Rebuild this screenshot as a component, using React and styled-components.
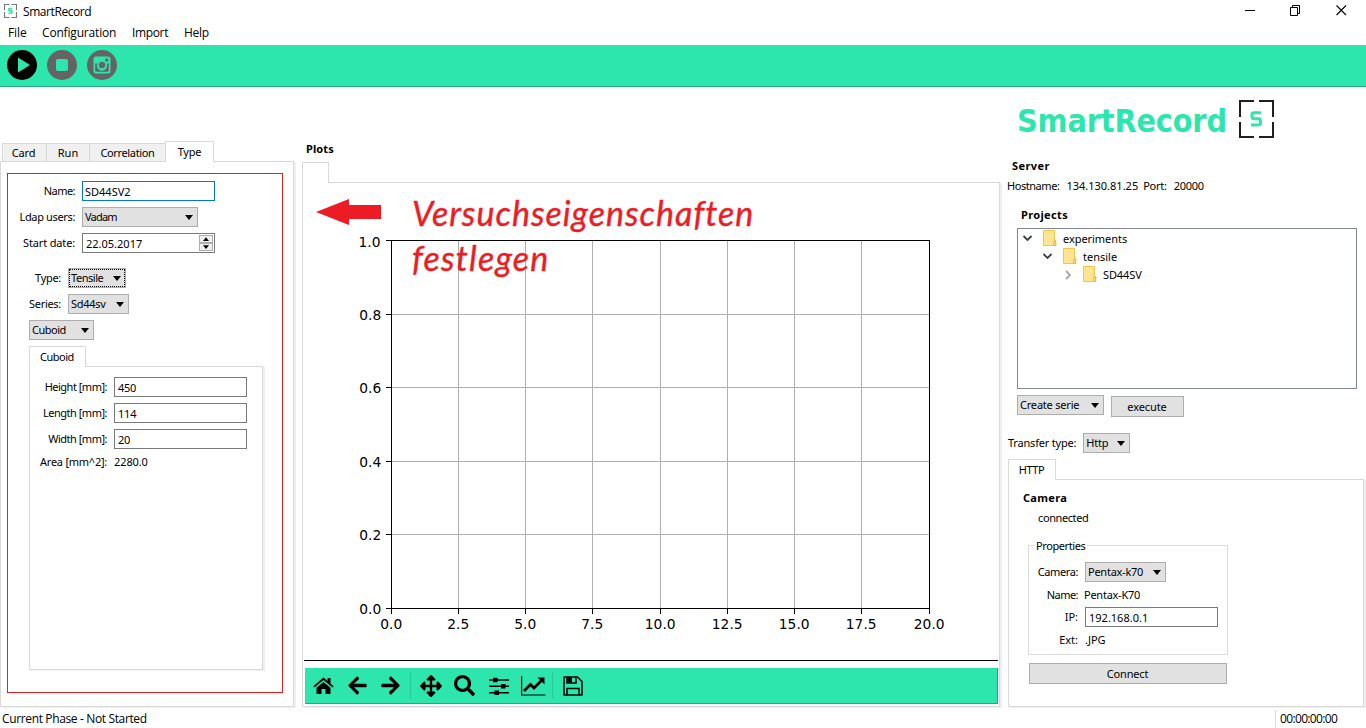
import React from 'react';
import styled, { createGlobalStyle, css } from 'styled-components';
import { FaArrowLeft, FaArrowRight, FaArrowsAlt, FaSearch } from 'react-icons/fa';

const GREEN = '#2de6ad';
const LINE = '#d9d9d9';
const RED = '#ed1c24';

const Global = createGlobalStyle`
  *, *::before, *::after { box-sizing: border-box; }
  body { margin: 0; background: #fff; overflow: hidden; }
  svg { display: block; flex: none; }
`;

const Window = styled.div`
  width: 1366px;
  height: 728px;
  display: flex;
  flex-direction: column;
  background: #fff;
  color: #000;
  font: 11px/14px 'Noto Sans', 'Open Sans', sans-serif;
  white-space: nowrap;
`;

const TitleBar = styled.header`
  height: 22px;
  display: flex;
  align-items: flex-start;
  padding: 4px 19px 0 4px;
`;
const Title = styled.span`
  margin-left: 6px;
  flex: 1;
  font: 12px/16px 'Open Sans', sans-serif;
  letter-spacing: -0.42px;
`;
const Controls = styled.div`
  display: flex;
  gap: 35px;
  padding-top: 1px;
`;

const MenuBar = styled.nav`
  height: 23px;
  display: flex;
  gap: 16px;
  padding: 2px 8px;
  font: 12px/18px 'Open Sans', sans-serif;
`;
const MenuItem = styled.span`
  width: ${(p) => p.$w}px;
  letter-spacing: ${(p) => p.$track || 0}px;
`;

const ToolBar = styled.div`
  height: 42px;
  display: flex;
  gap: 10px;
  padding: 5px 7px;
  background: ${GREEN};
  border-bottom: 1px solid #27ab85;
`;

const Main = styled.main`
  height: 621px;
  display: grid;
  grid-template-columns: 302px 704px 360px;
`;
const Column = styled.section`
  display: flex;
  flex-direction: column;
  align-items: flex-start;
  padding-top: ${(p) => p.$top || 0}px;
`;

const Text = styled.span`
  letter-spacing: ${(p) => p.$track || 0}px;
  margin-left: ${(p) => p.$shift || 0}px;
`;
const Heading = styled.h2`
  margin: ${(p) => p.$m || 0};
  font: bold 11px/14px 'Noto Sans', sans-serif;
  letter-spacing: ${(p) => p.$track || 0}px;
`;

const Tabs = styled.div`
  display: flex;
  align-items: flex-end;
  position: relative;
  z-index: 1;
  margin-bottom: -1px;
  padding-left: ${(p) => p.$left || 0}px;
`;
const Tab = styled.div`
  width: ${(p) => p.$w}px;
  height: 18px;
  border: 1px solid ${LINE};
  border-width: 1px 0 0 1px;
  background: #f0f0f0;
  margin-bottom: 1px;
  padding-right: ${(p) => p.$pr || 0}px;
  text-align: center;
  line-height: 18px;
  letter-spacing: ${(p) => p.$track || 0}px;
  ${(p) =>
    p.$active &&
    css`
      height: 21px;
      margin-bottom: 0;
      border-width: 1px 1px 0;
      background: #fff;
      line-height: 20px;
    `}
`;
const Pane = styled.div`
  width: ${(p) => p.$w}px;
  height: ${(p) => p.$h}px;
  border: 1px solid ${LINE};
  box-shadow: 2px 1px 0 #efefef;
  padding: ${(p) => p.$pad || 0};
`;

const Frame = styled.div`
  width: 276px;
  height: 520px;
  border: 1px solid ${RED};
  padding: 7px 0 0 21px;
`;
const Row = styled.div`
  display: flex;
  align-items: center;
  gap: ${(p) => p.$gap || 7}px;
  height: ${(p) => p.$h || 20}px;
  margin-top: ${(p) => p.$mt || 0}px;
  margin-left: ${(p) => p.$ml || 0}px;
`;
const Label = styled.label`
  width: ${(p) => p.$w}px;
  display: flex;
  justify-content: flex-end;
  letter-spacing: ${(p) => p.$track || 0}px;
`;
const Field = styled.div`
  width: 133px;
  height: 20px;
  display: flex;
  align-items: center;
  justify-content: space-between;
  padding: 2px 2px 0 ${(p) => p.$pl || 3}px;
  border: 1px solid ${(p) => (p.$focus ? '#0078d7' : '#7a7a7a')};
  background: #fff;
  letter-spacing: ${(p) => p.$track || 0}px;
`;
const ComboBox = styled.div`
  width: ${(p) => p.$w}px;
  height: 20px;
  display: flex;
  align-items: center;
  justify-content: space-between;
  padding: 0 4px 0 2px;
  border: 1px solid #adadad;
  background: #e1e1e1;
  letter-spacing: ${(p) => p.$track || 0}px;
  ${(p) => p.$focus && css`outline: 1px dotted #000; outline-offset: -2px;`}
`;
const Button = styled.div`
  width: ${(p) => p.$w}px;
  height: 21px;
  margin: ${(p) => p.$m || 0};
  padding-right: 1px;
  border: 1px solid #adadad;
  background: #e1e1e1;
  text-align: center;
  line-height: 20px;
  letter-spacing: ${(p) => p.$track || 0}px;
`;
const Spinner = styled.div`
  display: flex;
  flex-direction: column;
  margin: -2px -1px 0 0;
`;
const SpinButton = styled.div`
  width: 14px;
  height: 8px;
  display: flex;
  align-items: center;
  justify-content: center;
  border: 1px solid #adadad;
  background: #f0f0f0;
`;

const PlotArea = styled.div`
  position: relative;
  height: 478px;
  margin: 0 1px;
  border-bottom: 1px solid #000;
`;
const Note = styled.div`
  position: absolute;
  left: 108px;
  top: 7px;
  color: ${RED};
  font: italic 34px/45px Lato, sans-serif;
  font-variant-ligatures: none;
  -webkit-text-stroke: 0.4px ${RED};
`;
const NoteLine = styled.div`
  letter-spacing: ${(p) => p.$track}px;
`;
const Arrow = styled.svg`
  position: absolute;
  left: 12px;
  top: 16px;
`;
const PlotTools = styled.div`
  height: 36px;
  width: 693px;
  margin: 7px 0 0 2px;
  display: flex;
  align-items: center;
  padding-left: 7px;
  background: ${GREEN};
  border: solid #1fab80;
  border-width: 0 1px 1px 0;
`;
const Tool = styled.div`
  width: ${(p) => p.$w || 34}px;
  display: flex;
  justify-content: center;
`;
const Divider = styled.div`
  width: 1px;
  height: 27px;
  background: #29c998;
`;

const Brand = styled.div`
  display: flex;
  align-items: flex-start;
  height: 39px;
  margin-left: 11px;
`;
const BrandName = styled.h1`
  margin: 0;
  width: 222px;
  font: bold 32px/42px 'DejaVu Sans Condensed', 'DejaVu Sans', sans-serif;
  font-stretch: condensed;
  color: ${GREEN};
  letter-spacing: ${(p) => p.$track}px;
`;
const Tree = styled.div`
  width: 340px;
  height: 161px;
  margin: 6px 0 0 11px;
  border: 1px solid #828790;
  padding-top: 1px;
`;
const TreeRow = styled.div`
  height: 18px;
  display: flex;
  align-items: center;
  padding-left: ${(p) => 4 + p.$depth * 20}px;
  letter-spacing: ${(p) => p.$track || 0}px;
  svg + svg { margin: -1px 6px 0 9px; }
`;
const Group = styled.fieldset`
  width: 200px;
  height: 117px;
  margin: 13px 0 0 19px;
  padding: 10px 0 0 0;
  border: 1px solid #dcdcdc;
`;
const Legend = styled.legend`
  height: 14px;
  margin-left: 5px;
  padding: 0 2px;
  line-height: 16px;
  letter-spacing: ${(p) => p.$track || 0}px;
`;

const StatusBar = styled.footer`
  height: 20px;
  display: flex;
  justify-content: space-between;
  padding: 2px 0 0 2px;
  font: 12px/17px 'Open Sans', sans-serif;
`;
const Clock = styled.div`
  width: 91px;
  height: 17px;
  border-left: 1px solid ${LINE};
  padding-left: 4px;
  letter-spacing: ${(p) => p.$track || 0}px;
`;

const Caret = ({ up, small }) => (
  <svg width={small ? 6 : 8} height={small ? 4 : 5} viewBox="0 0 8 5">
    <path d={up ? 'M0 5L4 0L8 5Z' : 'M0 0H8L4 5Z'} />
  </svg>
);
const Combo = ({ children, ...rest }) => (
  <ComboBox {...rest}>
    <span>{children}</span>
    <Caret />
  </ComboBox>
);

const Mark = ({ w, h, stroke, sw }) => (
  <svg width={w} height={h} viewBox="0 0 35 38" fill="none">
    <path
      d="M1 17V1H15M20 1H34V17M34 22V37H20M15 37H1V22"
      stroke={stroke}
      strokeWidth={sw}
    />
    <path d="M22 12.7H15Q13 12.7 13 14.5V16.5Q13 18.8 15 18.8H19.5Q21.5 18.8 21.5 21V22.7Q21.5 25 19.5 25H12" stroke={GREEN} strokeWidth={sw + 1} />
  </svg>
);

const PlayIcon = () => (
  <svg width="30" height="30">
    <circle cx="15" cy="15" r="15" />
    <path d="M11 7.5L23 15L11 22.5Z" fill={GREEN} />
  </svg>
);
const StopIcon = () => (
  <svg width="30" height="30">
    <circle cx="15" cy="15" r="15" fill="#646464" />
    <rect x="9" y="9" width="12" height="12" rx="2" fill={GREEN} />
  </svg>
);
const CameraIcon = () => (
  <svg width="30" height="30">
    <circle cx="15" cy="15" r="15" fill="#646464" />
    <rect x="6.5" y="6.5" width="17" height="17" rx="2.5" fill={GREEN} />
    <path d="M8.2 13.5H10.5A5 5 0 1 0 19.5 13.5H21.8V20.5Q21.8 21.8 20.5 21.8H9.5Q8.2 21.8 8.2 20.5Z" fill="#646464" />
    <circle cx="15" cy="15" r="3.2" fill="#646464" />
    <rect x="18.2" y="8.5" width="3" height="3" rx=".4" fill="#646464" />
  </svg>
);

const HomeIcon = () => (
  <svg width="21" height="18">
    <path d="M.9 9.9L10.5 1.7L20.1 9.9" fill="none" stroke="#000" strokeWidth="1.8" />
    <path d="M14.5 1H17.5V7L14.5 4.4Z" />
    <path d="M3.5 10.8L10.5 5L17.5 10.8V17H12.5V12H8.5V17H3.5Z" />
  </svg>
);
const SlidersIcon = () => (
  <svg width="20" height="18">
    <path d="M0 3H20M0 9.3H20M0 15.7H20" stroke="#000" strokeWidth="1.5" />
    <path d="M4 .7H8.5V5.3H4ZM12 7H16.5V11.6H12ZM5.5 13.4H10V18H5.5Z" />
  </svg>
);
const ChartIcon = () => (
  <svg width="25" height="20" fill="none" stroke="#000">
    <path d="M.6 0V19H24.5" strokeWidth="1.2" />
    <path d="M3 15L9.5 8.5L13 12L20.5 4.5" strokeWidth="2.8" />
    <path d="M16.5 1.5H23.5V8.5Z" fill="#000" stroke="none" />
  </svg>
);
const SaveIcon = () => (
  <svg width="20" height="20" fill="none" stroke="#000" strokeWidth="1.5">
    <path d="M1 1H14.5L19 5.5V19H1Z" strokeLinejoin="round" />
    <path d="M4 19V12.5H16V19" />
    <path d="M4 1V7H13V1" />
    <path d="M4.5 1.5H9V6.5H4.5Z" fill="#000" stroke="none" />
  </svg>
);

const Chevron = ({ open }) => (
  <svg width="12" height="12" fill="none" stroke={open ? '#404040' : '#a6a6a6'} strokeWidth="1.8">
    <path d={open ? 'M1.5 3L5.5 7L9.5 3' : 'M4 2L8 6L4 10'} />
  </svg>
);
const FolderIcon = () => (
  <svg width="14" height="17">
    <path d="M.5 .5H11.5V10.5H12.7V15.5H.5Z" fill="#ffe591" stroke="#edc84b" />
    <path d="M10.8 15.5V11H12.7V15.5Z" fill="#ffe591" stroke="#e3b83a" />
  </svg>
);

const X_TICKS = [['0.0', 391], ['2.5', 458], ['5.0', 525], ['7.5', 592], ['10.0', 660], ['12.5', 727], ['15.0', 794], ['17.5', 861], ['20.0', 929]];
const Y_TICKS = [['1.0', 240], ['0.8', 314], ['0.6', 387], ['0.4', 461], ['0.2', 534], ['0.0', 608]];

const Chart = () => (
  <svg width="694" height="477" viewBox="304 183 694 477" fontFamily="'DejaVu Sans', sans-serif" fontSize="13.8">
    {X_TICKS.map(([t, x]) => (
      <g key={t}>
        <path d={`M${x + 0.5} 240V608`} stroke="#b0b0b0" />
        <path d={`M${x + 0.5} 608V614`} stroke="#000" />
        <text x={x + 0.2} y="629" textAnchor="middle">{t}</text>
      </g>
    ))}
    {Y_TICKS.map(([t, y]) => (
      <g key={t}>
        <path d={`M391 ${y + 0.5}H929`} stroke="#b0b0b0" />
        <path d={`M386 ${y + 0.5}H391`} stroke="#000" />
        <text x={t === '1.0' ? 380.5 : 381.3} y={y + (t === '1.0' ? 7 : 6)} textAnchor="end">{t}</text>
      </g>
    ))}
    <rect x="391.5" y="240.5" width="538" height="368" fill="none" stroke="#000" />
  </svg>
);

export default function App() {
  return (
    <Window>
      <Global />
      <TitleBar>
        <Mark w={13} h={14} stroke="#777" sw={3.5} />
        <Title>SmartRecord</Title>
        <Controls>
          <svg width="10" height="11"><path d="M0 5.5H10" stroke="#000" /></svg>
          <svg width="11" height="11" fill="none" stroke="#000">
            <path d="M.5 2.5H7.5V10.5H.5ZM2.5 2.5V.5H9.5V8.5H7.5" />
          </svg>
          <svg width="11" height="11"><path d="M.5 .5L10 10M10 .5L.5 10" stroke="#000" strokeWidth="1.1" /></svg>
        </Controls>
      </TitleBar>
      <MenuBar>
        <MenuItem $w={18} $track={-0.1}>File</MenuItem>
        <MenuItem $w={74} $track={-0.18}>Configuration</MenuItem>
        <MenuItem $w={36} $track={-0.35}>Import</MenuItem>
        <MenuItem $w={26} $track={-0.25}>Help</MenuItem>
      </MenuBar>
      <ToolBar>
        <PlayIcon />
        <StopIcon />
        <CameraIcon />
      </ToolBar>

      <Main>
        <Column $top={54}>
          <Tabs $left={2}>
            <Tab $w={44} $track={-0.2} $pr={2}>Card</Tab>
            <Tab $w={43}>Run</Tab>
            <Tab $w={76} $track={-0.35}>Correlation</Tab>
            <Tab $w={49} $track={-0.2}  $active>Type</Tab>
          </Tabs>
          <Pane $w={294} $h={546} $pad="11px 0 0 6px">
            <Frame>
              <Row><Label $w={46} $track={-0.55}>Name:</Label><Field $focus $pl={2}>SD44SV2</Field></Row>
              <Row $mt={6} $ml={-14}><Label $w={60} $track={-0.35}>Ldap users:</Label><Combo $w={116} $track={-0.8}>Vadam</Combo></Row>
              <Row $mt={6} $ml={-14}>
                <Label $w={60} $track={-0.15}>Start date:</Label>
                <Field>
                  <span>22.05.2017</span>
                  <Spinner>
                    <SpinButton><Caret up small /></SpinButton>
                    <SpinButton><Caret small /></SpinButton>
                  </Spinner>
                </Field>
              </Row>
              <Row $mt={15}><Label $w={32} $track={-0.3}>Type:</Label><Combo $w={58} $track={-0.45} $focus>Tensile</Combo></Row>
              <Row $mt={6}><Label $w={32} $track={-0.3}>Series:</Label><Combo $w={61} $track={-0.3}>Sd44sv</Combo></Row>
              <Row $mt={6}><Combo $w={65} $track={-0.5}>Cuboid</Combo></Row>
              <Row $mt={6}><Tabs><Tab $w={57} $track={-0.5} $active $pr={1}>Cuboid</Tab></Tabs></Row>
              <Pane $w={234} $h={304} $pad="10px 0 0 9px">
                <Row><Label $w={68} $track={-0.5}>Height [mm]:</Label><Field $track={-0.3}>450</Field></Row>
                <Row $mt={6}><Label $w={68} $track={-0.5}>Length [mm]:</Label><Field $track={-0.2}>114</Field></Row>
                <Row $mt={6}><Label $w={68} $track={-0.5}>Width [mm]:</Label><Field $track={-0.3}>20</Field></Row>
                <Row $h={14} $mt={6}><Label $w={68} $track={-0.25}>Area [mm^2]:</Label><Text $track={-0.1}>2280.0</Text></Row>
              </Pane>
            </Frame>
          </Pane>
        </Column>

        <Column $top={55}>
          <Heading $m="0 0 6px 4px" $track={0.1}>Plots</Heading>
          <Tabs><Tab $w={27} $active /></Tabs>
          <Pane $w={698} $h={525}>
            <PlotArea>
              <Chart />
              <Arrow width="66" height="27"><path d="M0 13L33 0V6H65V20H33V26Z" fill={RED} /></Arrow>
              <Note>
                <NoteLine $track={1}>Versuchseigenschaften</NoteLine>
                <NoteLine $track={1.2}>festlegen</NoteLine>
              </Note>
            </PlotArea>
            <PlotTools>
              <Tool $w={22}><HomeIcon /></Tool>
              <Tool $w={46}><FaArrowLeft size={21} /></Tool>
              <Tool $w={21}><FaArrowRight size={21} /></Tool>
              <Tool $w={9} />
              <Divider />
              <Tool $w={39}><FaArrowsAlt size={22} /></Tool>
              <Tool $w={29}><FaSearch size={21} /></Tool>
              <Tool $w={40}><SlidersIcon /></Tool>
              <Tool $w={29}><ChartIcon /></Tool>
              <Tool $w={4} />
              <Divider />
              <Tool $w={40}><SaveIcon /></Tool>
            </PlotTools>
          </Pane>
        </Column>

        <Column $top={13}>
          <Brand>
            <BrandName $track={-0.15}>SmartRecord</BrandName>
            <Mark w={35} h={38} stroke="#231f20" sw={2} />
          </Brand>
          <Heading $m="20px 0 0 6px" $track={0.4}>Server</Heading>
          <Row $h={14} $mt={6} $ml={1} $gap={7}>
            <Text $track={-0.45}>Hostname:</Text>
            <Text>134.130.81.25</Text>
            <Text $track={-0.25} $shift={-2}>Port:</Text>
            <Text $track={-0.3}>20000</Text>
          </Row>
          <Heading $m="15px 0 0 15px" $track={0.35}>Projects</Heading>
          <Tree>
            <TreeRow $depth={0} $track={-0.05}><Chevron open /><FolderIcon />experiments</TreeRow>
            <TreeRow $depth={1}><Chevron open /><FolderIcon />tensile</TreeRow>
            <TreeRow $depth={2} $track={-0.1}><Chevron /><FolderIcon />SD44SV</TreeRow>
          </Tree>
          <Row $mt={6} $ml={11}>
            <Combo $w={87} $track={-0.2}>Create serie</Combo>
            <Button $w={73} $m="2px 0 0 0" $track={-0.1}>execute</Button>
          </Row>
          <Row $mt={18} $ml={2}><Text $track={-0.2}>Transfer type:</Text><Combo $w={47} $track={-0.2}>Http</Combo></Row>
          <Row $mt={6} $ml={2}><Tabs><Tab $w={48} $track={-0.5} $active $pr={1}>HTTP</Tab></Tabs></Row>
          <Row $h={228} $ml={2}>
            <Pane $w={356} $h={228} $pad="11px 0 0 0">
              <Heading $m="0 0 0 14px" $track={0.3}>Camera</Heading>
              <Row $h={14} $mt={6} $ml={29}><Text $track={-0.4}>connected</Text></Row>
              <Group>
                <Legend $track={-0.4}>Properties</Legend>
                <Row><Label $w={49} $track={-0.4}>Camera:</Label><Combo $w={81} $track={-0.25}>Pentax-k70</Combo></Row>
                <Row $h={14} $mt={6}><Label $w={49} $track={-0.55}>Name:</Label><Text $track={-0.25} $shift={-1}>Pentax-K70</Text></Row>
                <Row $mt={5}><Label $w={49}>IP:</Label><Field>192.168.0.1</Field></Row>
                <Row $h={14} $mt={6}><Label $w={49}>Ext:</Label><Text>.JPG</Text></Row>
              </Group>
              <Button $w={198} $m="8px 0 0 20px" $track={-0.15}>Connect</Button>
            </Pane>
          </Row>
        </Column>
      </Main>

      <StatusBar>
        <Text $track={-0.36}>Current Phase - Not Started</Text>
        <Clock $track={-0.65}>00:00:00:00</Clock>
      </StatusBar>
    </Window>
  );
}
